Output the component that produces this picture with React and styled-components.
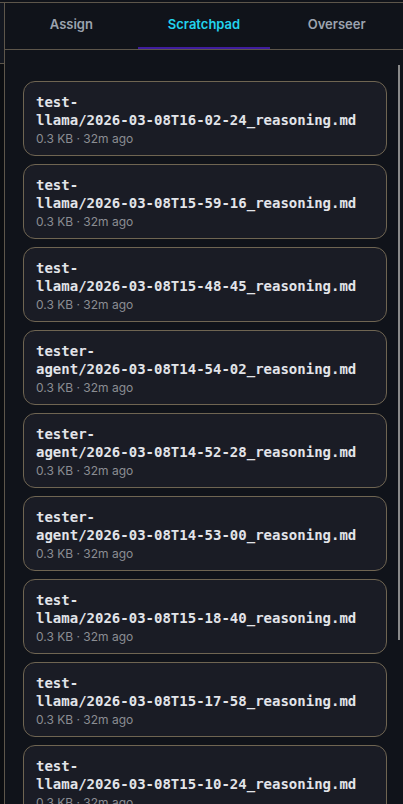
import styled, { createGlobalStyle } from 'styled-components';

const files = [
  'test-llama/2026-03-08T16-02-24_reasoning.md',
  'test-llama/2026-03-08T15-59-16_reasoning.md',
  'test-llama/2026-03-08T15-48-45_reasoning.md',
  'tester-agent/2026-03-08T14-54-02_reasoning.md',
  'tester-agent/2026-03-08T14-52-28_reasoning.md',
  'tester-agent/2026-03-08T14-53-00_reasoning.md',
  'test-llama/2026-03-08T15-18-40_reasoning.md',
  'test-llama/2026-03-08T15-17-58_reasoning.md',
  'test-llama/2026-03-08T15-10-24_reasoning.md',
  'test-llama/2026-03-08T15-02-11_reasoning.md',
  'tester-agent/2026-03-08T14-40-37_reasoning.md',
];

const tabs = ['Assign', 'Scratchpad', 'Overseer'];

const GlobalStyle = createGlobalStyle`
  html, body {
    margin: 0;
    padding: 0;
    background: #10131a;
    overflow: hidden;
  }
  * { box-sizing: border-box; }
`;

const Frame = styled.div`
  height: 804px;
  display: flex;
  flex-direction: column;
  padding-top: 2px;
  background: #10131a;
`;

const Body = styled.div`
  flex: 1;
  min-height: 0;
  display: flex;
  border-top: 1px solid #5d564b;
`;

const SideStrip = styled.div`
  width: 4px;
  display: flex;
  flex-direction: column;
  background: #0b0d11;

  &::before {
    content: '';
    height: 60px;
    background: #131720;
    border-bottom: 1px solid #5d564b;
  }
`;

const Panel = styled.div`
  flex: 1;
  min-width: 0;
  display: flex;
  flex-direction: column;
  border-left: 1px solid #5d564b;
  background: #10131a;
`;

const TabBar = styled.div`
  display: flex;
  height: 47px;
  border-bottom: 1px solid #5d564b;
`;

const Tab = styled.div`
  flex: 1;
  display: flex;
  align-items: center;
  justify-content: center;
  padding-bottom: 2px;
  font-family: Inter, 'Liberation Sans', sans-serif;
  font-size: 13px;
  font-weight: 600;
  color: ${(p) => (p.$active ? '#22d3ee' : '#9ca3af')};
  border-bottom: 2px solid ${(p) => (p.$active ? '#3f1d9e' : 'transparent')};
`;

const Content = styled.div`
  position: relative;
  flex: 1;
  min-height: 0;
  display: flex;
  padding: 15px 0 0 18px;
`;

const List = styled.div`
  flex: 1;
  overflow-y: auto;
  display: flex;
  flex-direction: column;
  gap: 8px;
  padding: 16px 16px 30px 0;
  scrollbar-width: none;

  &::-webkit-scrollbar {
    display: none;
  }
`;

/* scroll thumb drawn over the list's right edge */
const Thumb = styled.div`
  position: absolute;
  top: 15px;
  right: 3px;
  width: 2px;
  height: 575px;
  background: #8a8a8a;
`;

const Card = styled.div`
  flex-shrink: 0;
  display: flex;
  flex-direction: column;
  gap: 2px;
  padding: 11px 12px 8px;
  background: #1a1c25;
  border: 1px solid #6f6552;
  border-radius: 12px;
`;

const FileName = styled.div`
  font-family: 'DejaVu Sans Mono', 'Liberation Mono', monospace;
  font-size: 14px;
  font-weight: 700;
  line-height: 18px;
  color: #e2e4e9;
`;

const NoWrap = styled.span`
  white-space: nowrap;
`;

const Meta = styled.div`
  font-family: Inter, 'Liberation Sans', sans-serif;
  font-size: 12px;
  line-height: 16px;
  color: #8b8d93;
`;

function Name({ path }) {
  const cut = path.indexOf('-') + 1;
  return (
    <FileName>
      {path.slice(0, cut)}
      <NoWrap>{path.slice(cut)}</NoWrap>
    </FileName>
  );
}

export default function App() {
  return (
    <>
      <GlobalStyle />
      <Frame>
        <Body>
          <SideStrip />
          <Panel>
            <TabBar>
              {tabs.map((t) => (
                <Tab key={t} $active={t === 'Scratchpad'}>
                  {t}
                </Tab>
              ))}
            </TabBar>
            <Content>
              <List>
                {files.map((f) => (
                  <Card key={f}>
                    <Name path={f} />
                    <Meta>0.3 KB · 32m ago</Meta>
                  </Card>
                ))}
              </List>
              <Thumb />
            </Content>
          </Panel>
        </Body>
      </Frame>
    </>
  );
}
